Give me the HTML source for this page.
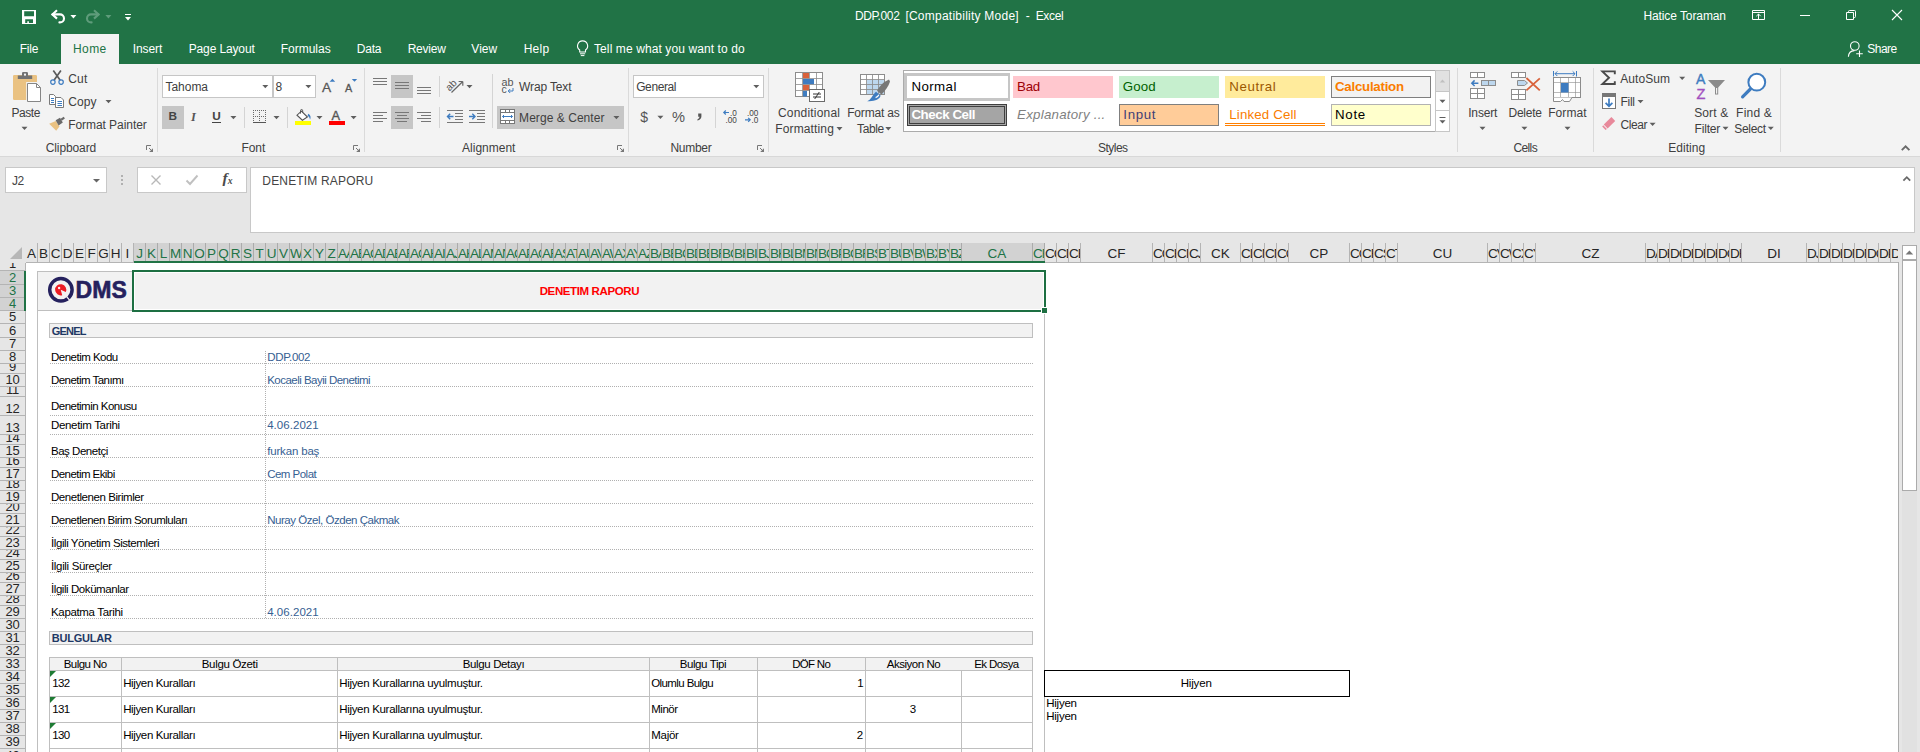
<!DOCTYPE html>
<html lang="tr"><head><meta charset="utf-8"><title>DDP.002 [Compatibility Mode] - Excel</title>
<style>
html,body{margin:0;padding:0;}
body{width:1920px;height:752px;overflow:hidden;position:relative;background:#fff;font-family:"Liberation Sans",sans-serif;}
.a,.i,.t{position:absolute;}
.t{white-space:pre;line-height:1;}
.i{overflow:visible;}
.ch{position:absolute;top:243px;height:19px;box-sizing:border-box;border-right:1px solid #b4b4b4;font-size:13.5px;line-height:21px;text-align:center;overflow:hidden;color:#262626;white-space:nowrap;}
.ch.n{text-align:left;letter-spacing:-1px;}
.ch.s{background:#d2d2d2;color:#217346;border-right-color:#ababab;}
.rh{position:absolute;left:0;width:25px;letter-spacing:-0.3px;box-sizing:border-box;border-bottom:1px solid #b4b4b4;overflow:hidden;color:#262626;font-size:13px;text-align:center;}
.rh span{position:absolute;left:0;right:0;bottom:0;line-height:13px;}
.rh.s{background:#d2d2d2;color:#217346;}
.hl{position:absolute;height:1px;background:#bfbfbf;}
.vl{position:absolute;width:1px;background:#bfbfbf;}
.dl{position:absolute;height:1px;left:50px;width:983px;background-image:linear-gradient(to right,#b0b0b0 1px,transparent 1px);background-size:2px 1px;}
</style></head>
<body>
<div class="a" style="left:0px;top:0px;width:1920px;height:64px;background:#217346;"></div>
<div class="a" style="left:0px;top:64px;width:1920px;height:92px;background:#f3f3f3;"></div>
<div class="a" style="left:0px;top:156px;width:1920px;height:1px;background:#d8d8d8;"></div>
<div class="a" style="left:0px;top:157px;width:1920px;height:106px;background:#e6e6e6;"></div>
<div class="a" style="left:61px;top:34px;width:58px;height:31px;background:#f3f3f3;"></div>
<div class="a" style="left:157px;top:68px;width:1px;height:84px;background:#dadada"></div>
<div class="a" style="left:364px;top:68px;width:1px;height:84px;background:#dadada"></div>
<div class="a" style="left:628px;top:68px;width:1px;height:84px;background:#dadada"></div>
<div class="a" style="left:768px;top:68px;width:1px;height:84px;background:#dadada"></div>
<div class="a" style="left:1457px;top:68px;width:1px;height:84px;background:#dadada"></div>
<div class="a" style="left:1593px;top:68px;width:1px;height:84px;background:#dadada"></div>
<div class="a" style="left:1780px;top:68px;width:1px;height:84px;background:#dadada"></div>
<div class="a" style="left:244px;top:107px;width:1px;height:21px;background:#d4d4d4"></div>
<div class="a" style="left:287px;top:107px;width:1px;height:21px;background:#d4d4d4"></div>
<div class="a" style="left:439px;top:76px;width:1px;height:21px;background:#d4d4d4"></div>
<div class="a" style="left:439px;top:107px;width:1px;height:21px;background:#d4d4d4"></div>
<div class="a" style="left:492px;top:74px;width:1px;height:54px;background:#d4d4d4"></div>
<div class="a" style="left:715px;top:107px;width:1px;height:21px;background:#d4d4d4"></div>
<svg class="i" style="left:0;top:0" width="1920" height="160" viewBox="0 0 1920 160">
<path d="M22 10H36V24H22Z M24.2 11.2V16.2H34V11.2Z M25.2 19.2V23H27.3V21.3H28.9V23H33V19.2Z" fill="#fff" fill-rule="evenodd"/>
<path d="M57 10.2L52.4 14.4L57 18.6" fill="none" stroke="#fff" stroke-width="2.1"/><path d="M52.6 14.4H60A4 4 0 0 1 60 22.4H59.4" fill="none" stroke="#fff" stroke-width="2.1" stroke-linecap="round"/>
<path d="M70.4 15.000000000000002H76.4L73.4 18.500000000000004Z" fill="#fff"/>
<path d="M94 10.2L98.6 14.4L94 18.6" fill="none" stroke="#5f9c7b" stroke-width="2.1"/><path d="M98.4 14.4H91A4 4 0 0 0 91 22.4H91.6" fill="none" stroke="#5f9c7b" stroke-width="2.1" stroke-linecap="round"/>
<path d="M105.4 15.000000000000002H111.4L108.4 18.500000000000004Z" fill="#5f9c7b"/>
<rect x="125" y="14" width="6" height="1" fill="#fff"/>
<path d="M125.0 17.0H131.0L128 20.500000000000004Z" fill="#fff"/>
<path d="M1752.5 10.5H1764.5V19.5H1752.5Z M1752.5 12.5H1764.5" fill="none" stroke="#fff"/><path d="M1758.5 14V19 M1756.3 16.2L1758.5 14L1760.7 16.2" fill="none" stroke="#fff"/>
<rect x="1800" y="15" width="10" height="1" fill="#fff"/>
<path d="M1846.5 12.5H1853.5V19.5H1846.5Z M1848.5 12.5V11.5Q1848.5 10.5 1849.5 10.5H1854.5Q1855.5 10.5 1855.5 11.5V16.5Q1855.5 17.5 1854.5 17.5H1853.5" fill="none" stroke="#fff"/>
<path d="M1892 10L1902 20M1902 10L1892 20" fill="none" stroke="#fff" stroke-width="1.1"/>
<circle cx="1854.8" cy="46" r="4.3" fill="none" stroke="#fff" stroke-width="1.1"/><path d="M1848.4 56.8C1848.6 53 1851 50.8 1854.4 50.6" fill="none" stroke="#fff" stroke-width="1.1"/><path d="M1859.5 50.5V57M1856.2 53.7H1862.8" stroke="#fff" stroke-width="1.1"/>
<path d="M582.6 40.9A5 5 0 0 1 585.5 50V52H579.7V50A5 5 0 0 1 582.6 40.9Z" fill="none" stroke="#fff" stroke-width="1.1"/><path d="M580 53.8H585.2M580.8 55.6H584.4" stroke="#fff"/>
<path d="M13 76.2Q13 75 14.2 75H35.8Q37 75 37 76.2V82H26.2V100H14.2Q13 100 13 98.8Z" fill="#eac282"/>
<path d="M17.8 75.4H32.2V79H17.8Z M22 75.4V73.2Q22 72 23.2 72H26.8Q28 72 28 73.2V75.4Z" fill="#727272"/><rect x="24" y="73.6" width="2" height="2" fill="#f3f3f3"/>
<path d="M27.5 83.5H36.5L40.5 87.5V101.5H27.5Z" fill="#fff" stroke="#868686"/><path d="M36.5 83.5V87.5H40.5" fill="none" stroke="#868686"/>
<path d="M21.5 126.69999999999999H27.5L24.5 130.0Z" fill="#5e5e5e"/>
<path d="M53.3 70.6L60.2 80.2M60.9 70.6L54 80.2" stroke="#5a5a5a" stroke-width="1.7" fill="none"/><circle cx="52.9" cy="82.1" r="2.2" fill="none" stroke="#3e7cc0" stroke-width="1.2"/><circle cx="61.1" cy="82.1" r="2.2" fill="none" stroke="#3e7cc0" stroke-width="1.2"/>
<path d="M49.5 94.5H53.5L55.5 96.5V104.5H49.5Z" fill="#fff" stroke="#7a7a7a"/><path d="M55.5 97.5H61L63.5 100V107.5H55.5Z" fill="#fff" stroke="#7a7a7a"/><path d="M51 98.5H54M51 100.5H54M51 102.5H54M57.5 101.5H62M57.5 103.5H62M57.5 105.5H62" stroke="#3e7cc0"/>
<path d="M105.5 99.9H111.5L108.5 103.2Z" fill="#5e5e5e"/>
<path d="M49.2 123.8L55.8 121L59.5 126.4L56.2 130.8Z" fill="#eac282"/><path d="M55.6 120.3L60 117.7L62.8 122.6L58.6 125.4Z" fill="#6a6a6a"/><path d="M60.6 118.8L63.8 116.7L64.9 118.6L61.8 120.8Z" fill="#6a6a6a"/>
<path d="M146.5 150V145.5H151" fill="none" stroke="#777" stroke-width="1"/><path d="M149 148L152 151" stroke="#777" stroke-width="1"/><path d="M153 148.2V152H149.2Z" fill="#777"/>
<rect x="162.5" y="75.5" width="110" height="22" fill="#fff" stroke="#c6c6c6"/><rect x="273.5" y="75.5" width="42" height="22" fill="#fff" stroke="#c6c6c6"/>
<path d="M262.3 84.9H268.3L265.3 88.2Z" fill="#5e5e5e"/>
<path d="M305.4 84.9H311.4L308.4 88.2Z" fill="#5e5e5e"/>
<text x="322" y="91.8" font-family="Liberation Sans, sans-serif" font-size="13.7" fill="#555" stroke="#555" stroke-width="0.3">A</text><path d="M329.6 81.8L332.4 78.8L335.2 81.8Z" fill="#3e7cc0"/>
<text x="345" y="91.8" font-family="Liberation Sans, sans-serif" font-size="10.8" fill="#555" stroke="#555" stroke-width="0.3">A</text><path d="M351.8 79L357.2 79L354.5 81.8Z" fill="#3e7cc0"/>
<rect x="162" y="106" width="22" height="23" fill="#c6c6c6"/>
<text x="191" y="120.5" font-family="Liberation Serif, serif" font-style="italic" font-weight="bold" font-size="12.5" fill="#555">I</text>
<rect x="212" y="122" width="9" height="1" fill="#444"/>
<path d="M230.4 116.0H236.4L233.4 119.3Z" fill="#5e5e5e"/>
<path d="M253 110.5H266M253 116.5H266M253.5 110V122M259.5 110V122M265.5 110V122" fill="none" stroke="#6a6a6a" stroke-dasharray="1 1" shape-rendering="crispEdges"/><rect x="253" y="122" width="13" height="1" fill="#555"/>
<path d="M273.5 116.0H279.5L276.5 119.3Z" fill="#5e5e5e"/>
<path d="M301.4 111.2L307.4 117L302.4 120.2L297 115.2Z" fill="#fff" stroke="#555" stroke-width="1.1"/><path d="M300.5 113.6V110.8Q300.5 109.5 301.6 109.5Q302.7 109.5 302.7 110.8V112.6" fill="none" stroke="#555"/><path d="M308.2 113.8C310.6 115 311.2 117.4 310 119.8C309.8 118 309.2 116.8 307.6 115.8Z" fill="#3e7cc0"/><rect x="295" y="121" width="16" height="4" fill="#ffff00"/>
<path d="M316.5 116.0H322.5L319.5 119.3Z" fill="#5e5e5e"/>
<text x="331.6" y="120.3" font-family="Liberation Sans, sans-serif" font-size="12.8" fill="#555" stroke="#555" stroke-width="0.35">A</text><rect x="329" y="121" width="16" height="4" fill="#ff0000"/>
<path d="M350.6 116.0H356.6L353.6 119.3Z" fill="#5e5e5e"/>
<path d="M353.5 150V145.5H358" fill="none" stroke="#777" stroke-width="1"/><path d="M356 148L359 151" stroke="#777" stroke-width="1"/><path d="M360 148.2V152H356.2Z" fill="#777"/>
<rect x="391" y="75" width="22" height="23" fill="#c6c6c6"/><rect x="391" y="106" width="22" height="23" fill="#c6c6c6"/>
<rect x="373" y="78" width="14" height="1" fill="#777"/>
<rect x="395" y="82" width="14" height="1" fill="#777"/>
<rect x="417" y="87" width="14" height="1" fill="#777"/>
<rect x="373" y="81" width="14" height="1" fill="#777"/>
<rect x="395" y="85" width="14" height="1" fill="#777"/>
<rect x="417" y="90" width="14" height="1" fill="#777"/>
<rect x="373" y="84" width="14" height="1" fill="#777"/>
<rect x="395" y="88" width="14" height="1" fill="#777"/>
<rect x="417" y="93" width="14" height="1" fill="#777"/>
<rect x="373" y="112" width="14" height="1" fill="#777"/>
<rect x="395.0" y="112" width="14.0" height="1" fill="#777"/>
<rect x="417" y="112" width="14" height="1" fill="#777"/>
<rect x="373" y="115" width="10" height="1" fill="#777"/>
<rect x="397.0" y="115" width="10.0" height="1" fill="#777"/>
<rect x="421" y="115" width="10" height="1" fill="#777"/>
<rect x="373" y="118" width="14" height="1" fill="#777"/>
<rect x="395.0" y="118" width="14.0" height="1" fill="#777"/>
<rect x="417" y="118" width="14" height="1" fill="#777"/>
<rect x="373" y="121" width="10" height="1" fill="#777"/>
<rect x="397.0" y="121" width="10.0" height="1" fill="#777"/>
<rect x="421" y="121" width="10" height="1" fill="#777"/>
<text x="447.5" y="89.5" font-family="Liberation Sans, sans-serif" font-size="10" fill="#555" transform="rotate(-45 451 88)">ab</text><path d="M451.5 92.5L462.5 81.8M462.8 81.5H458.6M462.8 81.5V85.7" stroke="#666" stroke-width="1.2" fill="none"/>
<path d="M466.5 85.0H472.5L469.5 88.3Z" fill="#5e5e5e"/>
<text x="501.6" y="86" font-family="Liberation Sans, sans-serif" font-size="10.5" fill="#555" textLength="12" lengthAdjust="spacingAndGlyphs">ab</text><text x="501.6" y="93.4" font-family="Liberation Sans, sans-serif" font-size="10.5" fill="#555">c</text><path d="M513 88V91H508.4M510.2 89L508.2 91L510.2 93" stroke="#3e7cc0" fill="none"/>
<rect x="447" y="110" width="16" height="1" fill="#777"/>
<rect x="447" y="122" width="16" height="1" fill="#777"/>
<rect x="455" y="113" width="8" height="1" fill="#777"/>
<rect x="455" y="116" width="8" height="1" fill="#777"/>
<rect x="455" y="119" width="8" height="1" fill="#777"/>
<path d="M453.5 116.5H447.5M450.2 113.8L447.5 116.5L450.2 119.2" stroke="#3e7cc0" stroke-width="1.4" fill="none"/>
<rect x="469" y="110" width="16" height="1" fill="#777"/>
<rect x="469" y="122" width="16" height="1" fill="#777"/>
<rect x="477" y="113" width="8" height="1" fill="#777"/>
<rect x="477" y="116" width="8" height="1" fill="#777"/>
<rect x="477" y="119" width="8" height="1" fill="#777"/>
<path d="M469 116.5H475M472.3 113.8L475 116.5L472.3 119.2" stroke="#3e7cc0" stroke-width="1.4" fill="none"/>
<rect x="497" y="106" width="127" height="23" fill="#c6c6c6"/>
<rect x="500.5" y="109.5" width="14" height="14" fill="#fff" stroke="#777"/><path d="M500.5 112.5H514.5M500.5 120.5H514.5M505.5 109.5V112.5M509.5 109.5V112.5M505.5 120.5V123.5M509.5 120.5V123.5" stroke="#777" fill="none"/><path d="M502.5 116.5H512.5M504 115L502.5 116.5L504 118M511 115L512.5 116.5L511 118" stroke="#3e7cc0" fill="none"/>
<path d="M613.4 116.0H619.4L616.4 119.3Z" fill="#5e5e5e"/>
<path d="M617.5 150V145.5H622" fill="none" stroke="#777" stroke-width="1"/><path d="M620 148L623 151" stroke="#777" stroke-width="1"/><path d="M624 148.2V152H620.2Z" fill="#777"/>
<rect x="633.5" y="75.5" width="130" height="22" fill="#fff" stroke="#c6c6c6"/>
<path d="M753.3 84.9H759.3L756.3 88.2Z" fill="#5e5e5e"/>
<text x="640.3" y="121.6" font-family="Liberation Sans, sans-serif" font-size="14" fill="#555">$</text>
<path d="M657.4 115.8H663.4L660.4 119.1Z" fill="#5e5e5e"/>
<text x="672" y="122" font-family="Liberation Sans, sans-serif" font-size="14" fill="#555" textLength="13" lengthAdjust="spacingAndGlyphs">%</text>
<path d="M698.2 113.6H701.4V116.4Q701.2 119.4 697.4 120.6V119.4Q699.4 118.6 699.6 116.8H698.2Z" fill="#555"/>
<path d="M729 112.5H723.8M725.8 110.5L723.8 112.5L725.8 114.5" stroke="#3e7cc0" fill="none" stroke-width="1.2"/><text x="730" y="116" font-family="Liberation Sans, sans-serif" font-size="8.2" fill="#444">.0</text><text x="725.5" y="122.8" font-family="Liberation Sans, sans-serif" font-size="8.2" fill="#444">.00</text>
<text x="747" y="116" font-family="Liberation Sans, sans-serif" font-size="8.2" fill="#444">.00</text><path d="M745 119.8H750.2M748.2 117.8L750.2 119.8L748.2 121.8" stroke="#3e7cc0" fill="none" stroke-width="1.2"/><text x="751.5" y="122.8" font-family="Liberation Sans, sans-serif" font-size="8.2" fill="#444">.0</text>
<path d="M757.5 150V145.5H762" fill="none" stroke="#777" stroke-width="1"/><path d="M760 148L763 151" stroke="#777" stroke-width="1"/><path d="M764 148.2V152H760.2Z" fill="#777"/>
<rect x="795.5" y="72.5" width="27" height="24" fill="#fff" stroke="#8c8c8c"/>
<rect x="803" y="73" width="6" height="5.5" fill="#d9623b"/><rect x="803" y="79" width="11" height="5.5" fill="#3e7cc0"/><rect x="803" y="85" width="6" height="5.5" fill="#d9623b"/><rect x="803" y="91" width="4" height="5.5" fill="#3e7cc0"/>
<path d="M795.5 78.5H822.5M795.5 84.5H822.5M795.5 90.5H822.5M802.5 72.5V96.5M809.5 72.5V78.5M816.5 72.5V96.5M809.5 84.5V96.5" stroke="#8c8c8c" fill="none" opacity="0.8"/>
<rect x="809.5" y="89.5" width="15" height="12" fill="#fff" stroke="#6a6a6a"/><path d="M813 94H821M813 97H821M819.3 92L814.7 99" stroke="#333" fill="none"/>
<path d="M836.5 127.1H842.5L839.5 130.4Z" fill="#5e5e5e"/>
<rect x="860.5" y="74.5" width="24" height="20" fill="#fff" stroke="#8c8c8c"/><rect x="867" y="80" width="17" height="14" fill="#bdd7ee"/>
<path d="M860.5 79.5H884.5M860.5 84.5H884.5M860.5 89.5H884.5M866.5 74.5V94.5M872.5 74.5V94.5M878.5 74.5V94.5" stroke="#8c8c8c" fill="none" opacity="0.85"/>
<path d="M889 79.5L890 81.5Q888 88 881.5 94.5L877 90.8Q881 83 889 79.5Z" fill="#777"/><path d="M876 91.8L880.6 95.6C880 99.6 874 101.8 867.2 101.2C871 100 872.4 95 876 91.8Z" fill="#3e7cc0"/><path d="M875.6 97.6Q878 97 878.8 94.8" stroke="#fff" fill="none" stroke-width="1.2"/>
<path d="M885.3 127.1H891.3L888.3 130.4Z" fill="#5e5e5e"/>
<rect x="903.5" y="70.5" width="532" height="61" fill="#fff" stroke="#ababab"/>
<rect x="904" y="73" width="106" height="28" fill="#c6c6c6"/><rect x="907" y="76" width="101" height="22" fill="#fff"/>
<rect x="1013" y="76" width="100" height="22" fill="#ffc7ce"/><rect x="1119" y="76" width="100" height="22" fill="#c6efce"/><rect x="1225" y="76" width="100" height="22" fill="#ffeb9c"/>
<rect x="1331.5" y="76.5" width="99" height="21" fill="#f2f2f2" stroke="#7f7f7f"/>
<rect x="907.5" y="104.5" width="99" height="21" fill="#a5a5a5" stroke="#3f3f3f"/><rect x="909.5" y="106.5" width="95" height="17" fill="none" stroke="#3f3f3f"/>
<rect x="1119.5" y="104.5" width="99" height="21" fill="#ffcc99" stroke="#7f7f7f"/>
<rect x="1225" y="123" width="100" height="1" fill="#ff8001"/><rect x="1225" y="125" width="100" height="1" fill="#ff8001"/>
<rect x="1331.5" y="104.5" width="99" height="21" fill="#ffffcc" stroke="#b2b2b2"/>
<rect x="1435.5" y="70.5" width="14" height="21" fill="#e1e1e1" stroke="#c6c6c6"/><rect x="1435.5" y="91.5" width="14" height="19" fill="#fff" stroke="#c6c6c6"/><rect x="1435.5" y="110.5" width="14" height="21" fill="#fff" stroke="#c6c6c6"/>
<path d="M1439.8 82.5L1442.5 79.6L1445.2 82.5Z" fill="#c0c0c0"/>
<path d="M1439.5 99.8H1445.5L1442.5 103.1Z" fill="#5e5e5e"/>
<rect x="1439.5" y="117" width="6" height="1" fill="#5e5e5e"/>
<path d="M1439.5 120.3H1445.5L1442.5 123.6Z" fill="#5e5e5e"/>
<rect x="1470.5" y="72.5" width="14" height="5" fill="#fff" stroke="#8c8c8c"/><path d="M1477.5 72.5V77.5" stroke="#8c8c8c"/>
<rect x="1481.5" y="80.5" width="14" height="5" fill="#bdd7ee" stroke="#8c8c8c"/><path d="M1488.5 80.5V85.5" stroke="#8c8c8c"/>
<path d="M1478.4 83.2H1471.8M1474.6 80.4L1471.8 83.2L1474.6 86" stroke="#3e7cc0" stroke-width="1.5" fill="none"/>
<rect x="1470.5" y="88.5" width="14" height="10" fill="#fff" stroke="#8c8c8c"/><path d="M1470.5 93.5H1484.5M1477.5 88.5V98.5" stroke="#8c8c8c"/>
<path d="M1479.5 126.69999999999999H1485.5L1482.5 130.0Z" fill="#5e5e5e"/>
<rect x="1511.5" y="72.5" width="14" height="5" fill="#fff" stroke="#8c8c8c"/><path d="M1518.5 72.5V77.5" stroke="#8c8c8c"/>
<path d="M1517.5 80.5H1524.5L1527.5 83L1524.5 85.5H1517.5Z" fill="#bdd7ee" stroke="#8c8c8c"/>
<rect x="1511.5" y="89.5" width="14" height="10" fill="#fff" stroke="#8c8c8c"/><path d="M1511.5 94.5H1525.5M1518.5 89.5V99.5" stroke="#8c8c8c"/>
<path d="M1526.4 78L1539.8 90.4M1539.8 78.4L1526.4 90.4" stroke="#d9623b" stroke-width="1.8"/>
<path d="M1521.4 126.69999999999999H1527.4L1524.4 130.0Z" fill="#5e5e5e"/>
<path d="M1553.5 71V76.5M1576.5 71V76.5M1555 73.7H1575M1557.3 71.4L1555 73.7L1557.3 76M1572.7 71.4L1575 73.7L1572.7 76" stroke="#3e7cc0" fill="none"/>
<rect x="1553.5" y="77.5" width="27" height="20" fill="#fff" stroke="#8c8c8c"/><path d="M1553.5 82.5H1580.5M1553.5 92.5H1580.5M1560.5 77.5V97.5M1568.5 77.5V97.5M1575.5 77.5V97.5" stroke="#8c8c8c" fill="none" opacity="0.6"/>
<rect x="1561" y="83" width="7.5" height="9.5" fill="#3e7cc0"/>
<path d="M1553.5 97.5V101.5H1560.5L1562.5 99.5L1564 101.5H1569.5L1572 97.5" fill="#fff" stroke="#8c8c8c"/>
<path d="M1564.5 126.69999999999999H1570.5L1567.5 130.0Z" fill="#5e5e5e"/>
<path d="M1614.8 74.2V71.4H1602.4L1609 77.7L1602.4 84H1614.8V81.2" fill="none" stroke="#4a4a4a" stroke-width="1.9"/>
<path d="M1679.2 76.8H1685.2L1682.2 80.1Z" fill="#5e5e5e"/>
<rect x="1602.5" y="93.5" width="13" height="15" fill="#fff" stroke="#777"/><rect x="1602" y="93" width="14" height="4" fill="#777"/><path d="M1609 98.5V106M1605.6 102.8L1609 106.2L1612.4 102.8" stroke="#3e7cc0" stroke-width="1.7" fill="none"/>
<path d="M1637.5 99.9H1643.5L1640.5 103.2Z" fill="#5e5e5e"/>
<path d="M1611.4 117L1615.2 121L1607.6 128.4L1603.8 124.6Z" fill="#e8899b"/><path d="M1603.2 125.2L1606.9 129L1605.6 130L1602.2 126.4Z" fill="#e8899b"/>
<path d="M1649.6 122.7H1655.6L1652.6 126.0Z" fill="#5e5e5e"/>
<text x="1696" y="83.6" font-family="Liberation Sans, sans-serif" font-size="14" fill="#3e7cc0" stroke="#3e7cc0" stroke-width="0.4">A</text><text x="1696.6" y="98.7" font-family="Liberation Sans, sans-serif" font-size="14.5" fill="#a14fbf" stroke="#a14fbf" stroke-width="0.4">Z</text>
<path d="M1708 80H1725L1718.2 87.4V94.6H1715V87.4Z" fill="#8a8a8a"/><rect x="1716" y="88" width="1.2" height="5.6" fill="#f3f3f3"/>
<path d="M1722.5 126.69999999999999H1728.5L1725.5 130.0Z" fill="#5e5e5e"/>
<circle cx="1756.8" cy="82.2" r="8.4" fill="#fff" stroke="#3e7cc0" stroke-width="2"/><path d="M1750.4 89L1742.6 96.8" stroke="#3e7cc0" stroke-width="3.2" stroke-linecap="round"/>
<path d="M1767.8 126.69999999999999H1773.8L1770.8 130.0Z" fill="#5e5e5e"/>
<path d="M1901.8 150.2L1905.6 146.4L1909.4 150.2" stroke="#6a6a6a" stroke-width="1.9" fill="none"/>
</svg>
<div class="a" style="left:5px;top:167px;width:102px;height:26px;background:#fff;border:1px solid #c8c8c8;box-sizing:border-box;"></div>
<svg class="i" style="left:92.5px;top:178.5px" width="7" height="4" viewBox="0 0 7 4" ><path d="M0 0H7L3.5 3.5Z" fill="#666"/></svg>
<div class="a" style="left:121px;top:175px;width:2px;height:2px;background:#b0b0b0;"></div>
<div class="a" style="left:121px;top:179px;width:2px;height:2px;background:#b0b0b0;"></div>
<div class="a" style="left:121px;top:183px;width:2px;height:2px;background:#b0b0b0;"></div>
<div class="a" style="left:137px;top:167px;width:110px;height:26px;background:#fff;border:1px solid #c8c8c8;box-sizing:border-box;"></div>
<svg class="i" style="left:150px;top:174px" width="12" height="12" viewBox="0 0 12 12" ><path d="M1.5 1.5L10.5 10.5M10.5 1.5L1.5 10.5" stroke="#b8b8b8" stroke-width="1.4" fill="none"/></svg>
<svg class="i" style="left:185px;top:174px" width="14" height="12" viewBox="0 0 14 12" ><path d="M1.5 6.5L5 10L12.5 1.5" stroke="#c0c0c0" stroke-width="1.9" fill="none"/></svg>
<svg class="i" style="left:218px;top:168px" width="20" height="22" viewBox="0 0 20 22" ><text x="4.4" y="15.4" font-family="Liberation Serif, serif" font-style="italic" font-weight="bold" font-size="15.5" fill="#4a4a4a">f</text><text x="9.8" y="15.6" font-family="Liberation Serif, serif" font-style="italic" font-weight="bold" font-size="9.5" fill="#4a4a4a">x</text></svg>
<div class="a" style="left:250px;top:167px;width:1665px;height:66px;background:#fff;border:1px solid #c8c8c8;box-sizing:border-box;"></div>
<svg class="i" style="left:1902px;top:175px" width="10" height="7" viewBox="0 0 10 7" ><path d="M1.4 5.6L4.8 2.2L8.2 5.6" stroke="#6a6a6a" stroke-width="1.8" fill="none"/></svg>
<div class="a" style="left:0px;top:243px;width:1920px;height:20px;background:#e6e6e6;"></div>
<div class="a" style="left:26px;top:263px;width:1872px;height:489px;background:#fff;"></div>
<svg class="i" style="left:9px;top:246px" width="14" height="14" viewBox="0 0 14 14" ><path d="M13 1V13H1Z" fill="#b7b7b7"/></svg>
<div class="ch" style="left:26px;width:12px">A</div>
<div class="ch" style="left:38px;width:12px">B</div>
<div class="ch" style="left:50px;width:12px">C</div>
<div class="ch" style="left:62px;width:12px">D</div>
<div class="ch" style="left:74px;width:12px">E</div>
<div class="ch" style="left:86px;width:12px">F</div>
<div class="ch" style="left:98px;width:12px">G</div>
<div class="ch" style="left:110px;width:12px">H</div>
<div class="ch" style="left:122px;width:12px">I</div>
<div class="ch s" style="left:134px;width:12px">J</div>
<div class="ch s" style="left:146px;width:12px">K</div>
<div class="ch s" style="left:158px;width:12px">L</div>
<div class="ch s" style="left:170px;width:12px">M</div>
<div class="ch s" style="left:182px;width:12px">N</div>
<div class="ch s" style="left:194px;width:12px">O</div>
<div class="ch s" style="left:206px;width:12px">P</div>
<div class="ch s" style="left:218px;width:12px">Q</div>
<div class="ch s" style="left:230px;width:12px">R</div>
<div class="ch s" style="left:242px;width:12px">S</div>
<div class="ch s" style="left:254px;width:12px">T</div>
<div class="ch s" style="left:266px;width:12px">U</div>
<div class="ch s" style="left:278px;width:12px">V</div>
<div class="ch s" style="left:290px;width:12px">W</div>
<div class="ch s" style="left:302px;width:12px">X</div>
<div class="ch s" style="left:314px;width:12px">Y</div>
<div class="ch s" style="left:326px;width:12px">Z</div>
<div class="ch s n" style="left:338px;width:12px">AA</div>
<div class="ch s n" style="left:350px;width:12px">AB</div>
<div class="ch s n" style="left:362px;width:12px">AC</div>
<div class="ch s n" style="left:374px;width:12px">AD</div>
<div class="ch s n" style="left:386px;width:12px">AE</div>
<div class="ch s n" style="left:398px;width:12px">AF</div>
<div class="ch s n" style="left:410px;width:12px">AG</div>
<div class="ch s n" style="left:422px;width:12px">AH</div>
<div class="ch s n" style="left:434px;width:12px">AI</div>
<div class="ch s n" style="left:446px;width:12px">AJ</div>
<div class="ch s n" style="left:458px;width:12px">AK</div>
<div class="ch s n" style="left:470px;width:12px">AL</div>
<div class="ch s n" style="left:482px;width:12px">AM</div>
<div class="ch s n" style="left:494px;width:12px">AN</div>
<div class="ch s n" style="left:506px;width:12px">AO</div>
<div class="ch s n" style="left:518px;width:12px">AP</div>
<div class="ch s n" style="left:530px;width:12px">AQ</div>
<div class="ch s n" style="left:542px;width:12px">AR</div>
<div class="ch s n" style="left:554px;width:12px">AS</div>
<div class="ch s n" style="left:566px;width:12px">AT</div>
<div class="ch s n" style="left:578px;width:12px">AU</div>
<div class="ch s n" style="left:590px;width:12px">AV</div>
<div class="ch s n" style="left:602px;width:12px">AW</div>
<div class="ch s n" style="left:614px;width:12px">AX</div>
<div class="ch s n" style="left:626px;width:12px">AY</div>
<div class="ch s n" style="left:638px;width:12px">AZ</div>
<div class="ch s n" style="left:650px;width:12px">BA</div>
<div class="ch s n" style="left:662px;width:12px">BB</div>
<div class="ch s n" style="left:674px;width:12px">BC</div>
<div class="ch s n" style="left:686px;width:12px">BD</div>
<div class="ch s n" style="left:698px;width:12px">BE</div>
<div class="ch s n" style="left:710px;width:12px">BF</div>
<div class="ch s n" style="left:722px;width:12px">BG</div>
<div class="ch s n" style="left:734px;width:12px">BH</div>
<div class="ch s n" style="left:746px;width:12px">BI</div>
<div class="ch s n" style="left:758px;width:12px">BJ</div>
<div class="ch s n" style="left:770px;width:12px">BK</div>
<div class="ch s n" style="left:782px;width:12px">BL</div>
<div class="ch s n" style="left:794px;width:12px">BM</div>
<div class="ch s n" style="left:806px;width:12px">BN</div>
<div class="ch s n" style="left:818px;width:12px">BO</div>
<div class="ch s n" style="left:830px;width:12px">BP</div>
<div class="ch s n" style="left:842px;width:12px">BQ</div>
<div class="ch s n" style="left:854px;width:12px">BR</div>
<div class="ch s n" style="left:866px;width:12px">BS</div>
<div class="ch s n" style="left:878px;width:12px">BT</div>
<div class="ch s n" style="left:890px;width:12px">BU</div>
<div class="ch s n" style="left:902px;width:12px">BV</div>
<div class="ch s n" style="left:914px;width:12px">BW</div>
<div class="ch s n" style="left:926px;width:12px">BX</div>
<div class="ch s n" style="left:938px;width:12px">BY</div>
<div class="ch s n" style="left:950px;width:12px">BZ</div>
<div class="ch s" style="left:962px;width:71px">CA</div>
<div class="ch s n" style="left:1033px;width:12px">CB</div>
<div class="ch n" style="left:1045px;width:12px">CC</div>
<div class="ch n" style="left:1057px;width:12px">CD</div>
<div class="ch n" style="left:1069px;width:12px">CE</div>
<div class="ch" style="left:1081px;width:72px">CF</div>
<div class="ch n" style="left:1153px;width:12px">CG</div>
<div class="ch n" style="left:1165px;width:12px">CH</div>
<div class="ch n" style="left:1177px;width:12px">CI</div>
<div class="ch n" style="left:1189px;width:12px">CJ</div>
<div class="ch" style="left:1201px;width:40px">CK</div>
<div class="ch n" style="left:1241px;width:12px">CL</div>
<div class="ch n" style="left:1253px;width:12px">CM</div>
<div class="ch n" style="left:1265px;width:12px">CN</div>
<div class="ch n" style="left:1277px;width:12px">CO</div>
<div class="ch" style="left:1289px;width:61px">CP</div>
<div class="ch n" style="left:1350px;width:12px">CQ</div>
<div class="ch n" style="left:1362px;width:12px">CR</div>
<div class="ch n" style="left:1374px;width:12px">CS</div>
<div class="ch n" style="left:1386px;width:12px">CT</div>
<div class="ch" style="left:1398px;width:90px">CU</div>
<div class="ch n" style="left:1488px;width:12px">CV</div>
<div class="ch n" style="left:1500px;width:12px">CW</div>
<div class="ch n" style="left:1512px;width:12px">CX</div>
<div class="ch n" style="left:1524px;width:12px">CY</div>
<div class="ch" style="left:1536px;width:110px">CZ</div>
<div class="ch n" style="left:1646px;width:12px">DA</div>
<div class="ch n" style="left:1658px;width:12px">DB</div>
<div class="ch n" style="left:1670px;width:12px">DC</div>
<div class="ch n" style="left:1682px;width:12px">DD</div>
<div class="ch n" style="left:1694px;width:12px">DE</div>
<div class="ch n" style="left:1706px;width:12px">DF</div>
<div class="ch n" style="left:1718px;width:12px">DG</div>
<div class="ch n" style="left:1730px;width:12px">DH</div>
<div class="ch" style="left:1742px;width:65px">DI</div>
<div class="ch n" style="left:1807px;width:12px">DJ</div>
<div class="ch n" style="left:1819px;width:12px">DK</div>
<div class="ch n" style="left:1831px;width:12px">DL</div>
<div class="ch n" style="left:1843px;width:12px">DM</div>
<div class="ch n" style="left:1855px;width:12px">DN</div>
<div class="ch n" style="left:1867px;width:12px">DO</div>
<div class="ch n" style="left:1879px;width:12px">DP</div>
<div class="ch n" style="left:1891px;width:7px;border-right:none">DQ</div>
<div class="a" style="left:26px;top:262px;width:1872px;height:1px;background:#b4b4b4;"></div>
<div class="a" style="left:134px;top:261px;width:911px;height:2px;background:#217346;"></div>
<div class="a" style="left:0px;top:263px;width:26px;height:489px;background:#e6e6e6;"></div>
<div class="a" style="left:25px;top:263px;width:1px;height:489px;background:#b4b4b4;"></div>
<div class="rh" style="top:263px;height:8px"><span>1</span></div>
<div class="rh s" style="top:271px;height:14px"><span>2</span></div>
<div class="rh s" style="top:285px;height:13px"><span>3</span></div>
<div class="rh s" style="top:298px;height:13px"><span>4</span></div>
<div class="rh" style="top:311px;height:13px"><span>5</span></div>
<div class="rh" style="top:324px;height:14px"><span>6</span></div>
<div class="rh" style="top:338px;height:13px"><span>7</span></div>
<div class="rh" style="top:351px;height:13px"><span>8</span></div>
<div class="rh" style="top:364px;height:10px"><span>9</span></div>
<div class="rh" style="top:374px;height:13px"><span>10</span></div>
<div class="rh" style="top:387px;height:10px"><span>11</span></div>
<div class="rh" style="top:397px;height:19px"><span>12</span></div>
<div class="rh" style="top:416px;height:19px"><span>13</span></div>
<div class="rh" style="top:435px;height:10px"><span>14</span></div>
<div class="rh" style="top:445px;height:13px"><span>15</span></div>
<div class="rh" style="top:458px;height:10px"><span>16</span></div>
<div class="rh" style="top:468px;height:13px"><span>17</span></div>
<div class="rh" style="top:481px;height:10px"><span>18</span></div>
<div class="rh" style="top:491px;height:13px"><span>19</span></div>
<div class="rh" style="top:504px;height:10px"><span>20</span></div>
<div class="rh" style="top:514px;height:13px"><span>21</span></div>
<div class="rh" style="top:527px;height:10px"><span>22</span></div>
<div class="rh" style="top:537px;height:13px"><span>23</span></div>
<div class="rh" style="top:550px;height:10px"><span>24</span></div>
<div class="rh" style="top:560px;height:13px"><span>25</span></div>
<div class="rh" style="top:573px;height:10px"><span>26</span></div>
<div class="rh" style="top:583px;height:13px"><span>27</span></div>
<div class="rh" style="top:596px;height:10px"><span>28</span></div>
<div class="rh" style="top:606px;height:13px"><span>29</span></div>
<div class="rh" style="top:619px;height:13px"><span>30</span></div>
<div class="rh" style="top:632px;height:13px"><span>31</span></div>
<div class="rh" style="top:645px;height:13px"><span>32</span></div>
<div class="rh" style="top:658px;height:13px"><span>33</span></div>
<div class="rh" style="top:671px;height:13px"><span>34</span></div>
<div class="rh" style="top:684px;height:13px"><span>35</span></div>
<div class="rh" style="top:697px;height:13px"><span>36</span></div>
<div class="rh" style="top:710px;height:13px"><span>37</span></div>
<div class="rh" style="top:723px;height:13px"><span>38</span></div>
<div class="rh" style="top:736px;height:13px"><span>39</span></div>
<div class="rh" style="top:749px;height:14px"><span>40</span></div>
<div class="a" style="left:24px;top:271px;width:2px;height:40px;background:#217346;"></div>
<div class="a" style="left:1898px;top:262px;width:1px;height:490px;background:#ababab;"></div>
<div class="a" style="left:1899px;top:243px;width:21px;height:509px;background:#e6e6e6;"></div>
<div class="a" style="left:1902px;top:260px;width:15px;height:492px;background:#e1e1e1;"></div>
<div class="a" style="left:1902px;top:245px;width:15px;height:15px;background:#fff;border:1px solid #ababab;box-sizing:border-box;"></div>
<svg class="i" style="left:1905px;top:250px" width="9" height="5" viewBox="0 0 9 5" ><path d="M0.6 4.6L4.4 0.4L8.2 4.6Z" fill="#777"/></svg>
<div class="a" style="left:1902px;top:260px;width:15px;height:231px;background:#fff;border:1px solid #ababab;box-sizing:border-box;"></div>
<div class="a" style="left:37px;top:271px;width:1008px;height:481px;background:transparent;border:1px solid #bfbfbf;box-sizing:border-box;border-bottom:none;"></div>
<div class="a" style="left:38px;top:272px;width:1006px;height:38px;background:#f2f2f2;"></div>
<div class="a" style="left:38px;top:310px;width:1006px;height:1px;background:#bfbfbf;"></div>
<div class="a" style="left:132px;top:270px;width:914px;height:42px;background:transparent;border:2px solid #1d6f42;box-sizing:border-box;"></div>
<div class="a" style="left:134px;top:272px;width:910px;height:38px;background:transparent;border:1px solid #fff;box-sizing:border-box;"></div>
<div class="a" style="left:1041px;top:307px;width:7px;height:7px;background:#1d6f42;border:1px solid #fff;box-sizing:border-box;"></div>
<svg class="i" style="left:0;top:0" width="140" height="320" viewBox="0 0 140 320"><circle cx="60.9" cy="289.8" r="11.2" fill="none" stroke="#25215e" stroke-width="3.5"/>
<path d="M66.6 296.6L69.6 300.2" stroke="#f2f2f2" stroke-width="1.3"/>
<path d="M60.7 289.8L62.24 295.18A5.6 5.6 0 1 1 65.82 292.08Z" fill="#ec1c24"/>
<path d="M60.7 289.8L66.2 290.6L65.6 292.6L62.6 294.2Z" fill="#f2f2f2" opacity="0"/>
<circle cx="59.1" cy="288" r="1.2" fill="#fff" opacity="0.9"/>
<text x="75.6" y="297.9" font-family="Liberation Sans, sans-serif" font-weight="bold" font-size="23.8" fill="#25215e" stroke="#25215e" stroke-width="0.6" textLength="51.2" lengthAdjust="spacingAndGlyphs">DMS</text></svg>
<div class="a" style="left:49px;top:323px;width:984px;height:15px;background:#f2f2f2;border:1px solid #bfbfbf;box-sizing:border-box;"></div>
<div class="a" style="left:49px;top:631px;width:984px;height:14px;background:#f2f2f2;border:1px solid #bfbfbf;box-sizing:border-box;"></div>
<div class="dl" style="top:363px"></div>
<div class="dl" style="top:386px"></div>
<div class="dl" style="top:415px"></div>
<div class="dl" style="top:434px"></div>
<div class="dl" style="top:457px"></div>
<div class="dl" style="top:480px"></div>
<div class="dl" style="top:503px"></div>
<div class="dl" style="top:526px"></div>
<div class="dl" style="top:549px"></div>
<div class="dl" style="top:572px"></div>
<div class="dl" style="top:595px"></div>
<div class="dl" style="top:618px"></div>
<div class="a" style="left:265px;top:351px;width:1px;height:268px;background-image:linear-gradient(to bottom,#b0b0b0 1px,transparent 1px);background-size:1px 2px;"></div>
<div class="a" style="left:49px;top:657px;width:984px;height:14px;background:#f2f2f2;"></div>
<div class="hl" style="left:49px;top:657px;width:984px"></div>
<div class="hl" style="left:49px;top:670px;width:984px"></div>
<div class="hl" style="left:49px;top:696px;width:984px"></div>
<div class="hl" style="left:49px;top:722px;width:984px"></div>
<div class="hl" style="left:49px;top:748px;width:984px"></div>
<div class="vl" style="left:49px;top:657px;height:95px"></div>
<div class="vl" style="left:121px;top:657px;height:95px"></div>
<div class="vl" style="left:337px;top:657px;height:95px"></div>
<div class="vl" style="left:649px;top:657px;height:95px"></div>
<div class="vl" style="left:757px;top:657px;height:95px"></div>
<div class="vl" style="left:865px;top:657px;height:95px"></div>
<div class="vl" style="left:961px;top:670px;height:82px"></div>
<div class="vl" style="left:1032px;top:657px;height:95px"></div>
<svg class="i" style="left:50px;top:671px" width="6" height="6" viewBox="0 0 6 6" ><path d="M0 0H6L0 6Z" fill="#1e7b34"/></svg>
<svg class="i" style="left:50px;top:697px" width="6" height="6" viewBox="0 0 6 6" ><path d="M0 0H6L0 6Z" fill="#1e7b34"/></svg>
<svg class="i" style="left:50px;top:723px" width="6" height="6" viewBox="0 0 6 6" ><path d="M0 0H6L0 6Z" fill="#1e7b34"/></svg>
<div class="a" style="left:1044px;top:670px;width:306px;height:27px;background:#fff;border:1px solid #000;box-sizing:border-box;"></div>
<span class="t" style="left:855.0px;top:10.2px;font-size:12px;color:#fff;letter-spacing:-0.39px;">DDP.002</span>
<span class="t" style="left:905.4px;top:10.2px;font-size:12px;color:#fff;letter-spacing:0.24px;">[Compatibility Mode]</span>
<span class="t" style="left:1025.7px;top:10.2px;font-size:12px;color:#fff;letter-spacing:0.30px;">-</span>
<span class="t" style="left:1035.7px;top:10.2px;font-size:12px;color:#fff;letter-spacing:-0.33px;">Excel</span>
<span class="t" style="left:1643.4px;top:10.2px;font-size:12px;color:#fff;letter-spacing:-0.09px;">Hatice Toraman</span>
<span class="t" style="left:1867.3px;top:42.8px;font-size:12px;color:#fff;letter-spacing:-0.53px;">Share</span>
<span class="t" style="left:19.7px;top:43.1px;font-size:12px;color:#fff;letter-spacing:-0.19px;">File</span>
<span class="t" style="left:132.7px;top:43.1px;font-size:12px;color:#fff;letter-spacing:-0.07px;">Insert</span>
<span class="t" style="left:188.7px;top:43.1px;font-size:12px;color:#fff;letter-spacing:-0.13px;">Page Layout</span>
<span class="t" style="left:280.7px;top:43.1px;font-size:12px;color:#fff;letter-spacing:-0.00px;">Formulas</span>
<span class="t" style="left:356.7px;top:43.1px;font-size:12px;color:#fff;letter-spacing:-0.19px;">Data</span>
<span class="t" style="left:407.7px;top:43.1px;font-size:12px;color:#fff;letter-spacing:-0.23px;">Review</span>
<span class="t" style="left:471.3px;top:43.1px;font-size:12px;color:#fff;letter-spacing:0.05px;">View</span>
<span class="t" style="left:523.7px;top:43.1px;font-size:12px;color:#fff;letter-spacing:0.23px;">Help</span>
<span class="t" style="left:594.0px;top:43.1px;font-size:12px;color:#fff;letter-spacing:0.10px;">Tell me what you want to do</span>
<span class="t" style="left:73.0px;top:43.1px;font-size:12px;color:#217346;letter-spacing:0.42px;">Home</span>
<span class="t" style="left:11.4px;top:107.0px;font-size:12px;color:#404040;letter-spacing:-0.44px;">Paste</span>
<span class="t" style="left:68.2px;top:73.3px;font-size:12px;color:#404040;letter-spacing:0.27px;">Cut</span>
<span class="t" style="left:68.2px;top:96.3px;font-size:12px;color:#404040;letter-spacing:0.12px;">Copy</span>
<span class="t" style="left:68.2px;top:118.8px;font-size:12px;color:#404040;letter-spacing:-0.06px;">Format Painter</span>
<span class="t" style="left:45.7px;top:142.0px;font-size:12px;color:#404040;letter-spacing:-0.10px;">Clipboard</span>
<span class="t" style="left:165.5px;top:81.2px;font-size:12px;color:#404040;letter-spacing:-0.03px;">Tahoma</span>
<span class="t" style="left:275.6px;top:81.2px;font-size:12px;color:#404040;letter-spacing:0.81px;">8</span>
<span class="t" style="left:241.5px;top:142.0px;font-size:12px;color:#404040;letter-spacing:-0.08px;">Font</span>
<span class="t" style="left:168.5px;top:111.0px;font-size:11.8px;color:#444;letter-spacing:-0.13px;font-weight:bold;">B</span>
<span class="t" style="left:212.3px;top:111.0px;font-size:11.8px;color:#444;letter-spacing:-0.13px;font-weight:bold;">U</span>
<span class="t" style="left:519.1px;top:81.4px;font-size:12px;color:#404040;letter-spacing:-0.14px;">Wrap Text</span>
<span class="t" style="left:519.1px;top:111.9px;font-size:12px;color:#404040;letter-spacing:0.05px;">Merge &amp; Center</span>
<span class="t" style="left:462.1px;top:142.0px;font-size:12px;color:#404040;letter-spacing:0.00px;">Alignment</span>
<span class="t" style="left:636.2px;top:81.2px;font-size:12px;color:#404040;letter-spacing:-0.40px;">General</span>
<span class="t" style="left:670.4px;top:141.9px;font-size:12px;color:#404040;letter-spacing:-0.26px;">Number</span>
<span class="t" style="left:777.9px;top:107.1px;font-size:12px;color:#404040;letter-spacing:0.20px;">Conditional</span>
<span class="t" style="left:775.3px;top:122.9px;font-size:12px;color:#404040;letter-spacing:0.13px;">Formatting</span>
<span class="t" style="left:847.2px;top:107.1px;font-size:12px;color:#404040;letter-spacing:-0.17px;">Format as</span>
<span class="t" style="left:857.0px;top:122.9px;font-size:12px;color:#404040;letter-spacing:-0.36px;">Table</span>
<span class="t" style="left:1098.0px;top:141.9px;font-size:12px;color:#404040;letter-spacing:-0.53px;">Styles</span>
<span class="t" style="left:1468.2px;top:107.2px;font-size:12px;color:#404040;letter-spacing:-0.15px;">Insert</span>
<span class="t" style="left:1508.5px;top:107.2px;font-size:12px;color:#404040;letter-spacing:-0.25px;">Delete</span>
<span class="t" style="left:1548.2px;top:107.2px;font-size:12px;color:#404040;letter-spacing:0.08px;">Format</span>
<span class="t" style="left:1513.5px;top:142.1px;font-size:12px;color:#404040;letter-spacing:-0.63px;">Cells</span>
<span class="t" style="left:1620.2px;top:72.9px;font-size:12px;color:#404040;letter-spacing:0.09px;">AutoSum</span>
<span class="t" style="left:1620.5px;top:96.1px;font-size:12px;color:#404040;letter-spacing:-0.31px;">Fill</span>
<span class="t" style="left:1620.5px;top:118.6px;font-size:12px;color:#404040;letter-spacing:-0.42px;">Clear</span>
<span class="t" style="left:1694.2px;top:107.0px;font-size:12px;color:#404040;letter-spacing:0.12px;">Sort &amp;</span>
<span class="t" style="left:1694.5px;top:123.1px;font-size:12px;color:#404040;letter-spacing:-0.16px;">Filter</span>
<span class="t" style="left:1736.1px;top:107.0px;font-size:12px;color:#404040;letter-spacing:0.22px;">Find &amp;</span>
<span class="t" style="left:1734.2px;top:123.1px;font-size:12px;color:#404040;letter-spacing:-0.29px;">Select</span>
<span class="t" style="left:1668.2px;top:142.1px;font-size:12px;color:#404040;letter-spacing:0.04px;">Editing</span>
<span class="t" style="left:911.4px;top:80.0px;font-size:13.3px;color:#000;letter-spacing:0.42px;">Normal</span>
<span class="t" style="left:1017.1px;top:80.0px;font-size:13.3px;color:#9c0006;letter-spacing:-0.26px;">Bad</span>
<span class="t" style="left:1122.8px;top:80.0px;font-size:13.3px;color:#006100;letter-spacing:0.14px;">Good</span>
<span class="t" style="left:1229.3px;top:80.0px;font-size:13.3px;color:#9c5700;letter-spacing:0.58px;">Neutral</span>
<span class="t" style="left:1335.0px;top:80.0px;font-size:13.3px;color:#fa7d00;letter-spacing:-0.26px;font-weight:bold;">Calculation</span>
<span class="t" style="left:911.4px;top:107.7px;font-size:13.3px;color:#fff;letter-spacing:-0.43px;font-weight:bold;">Check Cell</span>
<span class="t" style="left:1017.1px;top:107.7px;font-size:13.3px;color:#7f7f7f;letter-spacing:0.23px;font-style:italic;">Explanatory ...</span>
<span class="t" style="left:1123.3px;top:107.7px;font-size:13.3px;color:#3f3f76;letter-spacing:0.66px;">Input</span>
<span class="t" style="left:1229.3px;top:107.7px;font-size:13.3px;color:#fa7d00;letter-spacing:0.14px;">Linked Cell</span>
<span class="t" style="left:1335.0px;top:107.7px;font-size:13.3px;color:#000;letter-spacing:0.70px;">Note</span>
<span class="t" style="left:12.0px;top:174.8px;font-size:12px;color:#444;letter-spacing:-0.49px;">J2</span>
<span class="t" style="left:262.3px;top:174.8px;font-size:12px;color:#444;letter-spacing:0.17px;">DENETIM RAPORU</span>
<span class="t" style="left:539.7px;top:286.0px;font-size:11.5px;color:#ff0000;letter-spacing:-0.38px;font-weight:bold;">DENETIM RAPORU</span>
<span class="t" style="left:51.7px;top:325.5px;font-size:11px;color:#1f3864;letter-spacing:-0.78px;font-weight:bold;">GENEL</span>
<span class="t" style="left:51.7px;top:633.0px;font-size:11px;color:#1f3864;letter-spacing:-0.21px;font-weight:bold;">BULGULAR</span>
<span class="t" style="left:51.0px;top:351.6px;font-size:11.5px;color:#000;letter-spacing:-0.51px;">Denetim Kodu</span>
<span class="t" style="left:267.2px;top:351.6px;font-size:11.5px;color:#366092;letter-spacing:-0.31px;">DDP.002</span>
<span class="t" style="left:51.0px;top:374.6px;font-size:11.5px;color:#000;letter-spacing:-0.54px;">Denetim Tanımı</span>
<span class="t" style="left:267.2px;top:374.6px;font-size:11.5px;color:#366092;letter-spacing:-0.52px;">Kocaeli Bayii Denetimi</span>
<span class="t" style="left:51.0px;top:400.6px;font-size:11.5px;color:#000;letter-spacing:-0.52px;">Denetimin Konusu</span>
<span class="t" style="left:51.0px;top:419.6px;font-size:11.5px;color:#000;letter-spacing:-0.33px;">Denetim Tarihi</span>
<span class="t" style="left:267.2px;top:419.6px;font-size:11.5px;color:#366092;letter-spacing:0.04px;">4.06.2021</span>
<span class="t" style="left:51.0px;top:445.6px;font-size:11.5px;color:#000;letter-spacing:-0.48px;">Baş Denetçi</span>
<span class="t" style="left:267.2px;top:445.6px;font-size:11.5px;color:#366092;letter-spacing:-0.17px;">furkan baş</span>
<span class="t" style="left:51.0px;top:468.6px;font-size:11.5px;color:#000;letter-spacing:-0.56px;">Denetim Ekibi</span>
<span class="t" style="left:267.2px;top:468.6px;font-size:11.5px;color:#366092;letter-spacing:-0.52px;">Cem Polat</span>
<span class="t" style="left:51.0px;top:491.6px;font-size:11.5px;color:#000;letter-spacing:-0.44px;">Denetlenen Birimler</span>
<span class="t" style="left:51.0px;top:514.6px;font-size:11.5px;color:#000;letter-spacing:-0.50px;">Denetlenen Birim Sorumluları</span>
<span class="t" style="left:267.2px;top:514.6px;font-size:11.5px;color:#366092;letter-spacing:-0.47px;">Nuray Özel, Özden Çakmak</span>
<span class="t" style="left:51.0px;top:537.6px;font-size:11.5px;color:#000;letter-spacing:-0.42px;">İlgili Yönetim Sistemleri</span>
<span class="t" style="left:51.0px;top:560.6px;font-size:11.5px;color:#000;letter-spacing:-0.34px;">İlgili Süreçler</span>
<span class="t" style="left:51.0px;top:583.6px;font-size:11.5px;color:#000;letter-spacing:-0.43px;">İlgili Dokümanlar</span>
<span class="t" style="left:51.0px;top:606.6px;font-size:11.5px;color:#000;letter-spacing:-0.34px;">Kapatma Tarihi</span>
<span class="t" style="left:267.2px;top:606.6px;font-size:11.5px;color:#366092;letter-spacing:0.04px;">4.06.2021</span>
<span class="t" style="left:63.7px;top:658.6px;font-size:11.5px;color:#000;letter-spacing:-0.54px;">Bulgu No</span>
<span class="t" style="left:201.7px;top:658.6px;font-size:11.5px;color:#000;letter-spacing:-0.31px;">Bulgu Özeti</span>
<span class="t" style="left:462.7px;top:658.6px;font-size:11.5px;color:#000;letter-spacing:-0.36px;">Bulgu Detayı</span>
<span class="t" style="left:679.7px;top:658.6px;font-size:11.5px;color:#000;letter-spacing:-0.40px;">Bulgu Tipi</span>
<span class="t" style="left:792.2px;top:658.6px;font-size:11.5px;color:#000;letter-spacing:-0.70px;">DÖF No</span>
<span class="t" style="left:886.7px;top:658.6px;font-size:11.5px;color:#000;letter-spacing:-0.47px;">Aksiyon No</span>
<span class="t" style="left:974.2px;top:658.6px;font-size:11.5px;color:#000;letter-spacing:-0.59px;">Ek Dosya</span>
<span class="t" style="left:52.2px;top:678.1px;font-size:11.5px;color:#000;letter-spacing:-0.56px;">132</span>
<span class="t" style="left:123.2px;top:678.1px;font-size:11.5px;color:#000;letter-spacing:-0.37px;">Hijyen Kuralları</span>
<span class="t" style="left:339.2px;top:678.1px;font-size:11.5px;color:#000;letter-spacing:-0.31px;">Hijyen Kurallarına uyulmuştur.</span>
<span class="t" style="left:52.2px;top:704.1px;font-size:11.5px;color:#000;letter-spacing:-0.56px;">131</span>
<span class="t" style="left:123.2px;top:704.1px;font-size:11.5px;color:#000;letter-spacing:-0.37px;">Hijyen Kuralları</span>
<span class="t" style="left:339.2px;top:704.1px;font-size:11.5px;color:#000;letter-spacing:-0.31px;">Hijyen Kurallarına uyulmuştur.</span>
<span class="t" style="left:52.2px;top:730.1px;font-size:11.5px;color:#000;letter-spacing:-0.56px;">130</span>
<span class="t" style="left:123.2px;top:730.1px;font-size:11.5px;color:#000;letter-spacing:-0.37px;">Hijyen Kuralları</span>
<span class="t" style="left:339.2px;top:730.1px;font-size:11.5px;color:#000;letter-spacing:-0.31px;">Hijyen Kurallarına uyulmuştur.</span>
<span class="t" style="left:651.2px;top:678.1px;font-size:11.5px;color:#000;letter-spacing:-0.59px;">Olumlu Bulgu</span>
<span class="t" style="left:651.2px;top:704.1px;font-size:11.5px;color:#000;letter-spacing:-0.45px;">Minör</span>
<span class="t" style="left:651.2px;top:730.1px;font-size:11.5px;color:#000;letter-spacing:-0.25px;">Majör</span>
<span class="t" style="left:857.2px;top:678.1px;font-size:11.5px;color:#000;letter-spacing:-0.91px;">1</span>
<span class="t" style="left:856.7px;top:730.1px;font-size:11.5px;color:#000;letter-spacing:0.09px;">2</span>
<span class="t" style="left:909.7px;top:704.1px;font-size:11.5px;color:#000;letter-spacing:0.09px;">3</span>
<span class="t" style="left:1180.7px;top:678.1px;font-size:11.5px;color:#000;letter-spacing:-0.16px;">Hijyen</span>
<span class="t" style="left:1046.2px;top:697.5px;font-size:11.5px;color:#000;letter-spacing:-0.24px;">Hijyen</span>
<span class="t" style="left:1046.2px;top:710.5px;font-size:11.5px;color:#000;letter-spacing:-0.24px;">Hijyen</span>
</body></html>
